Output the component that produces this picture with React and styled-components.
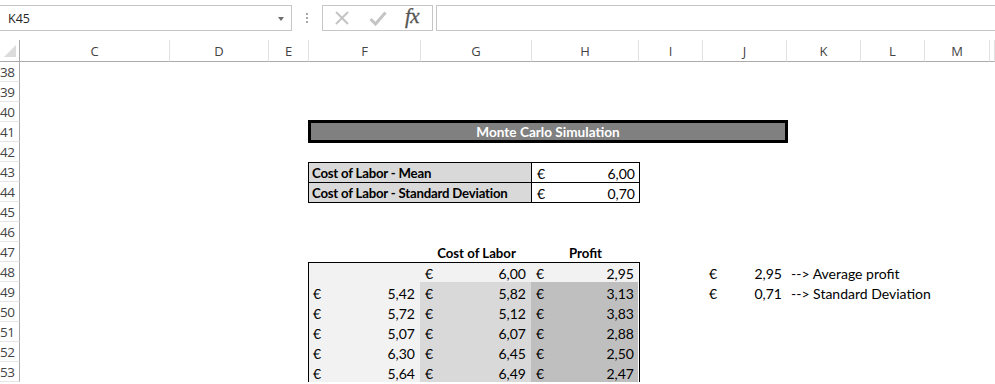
import React from 'react';
import styled, { createGlobalStyle } from 'styled-components';

const Global = createGlobalStyle`
  html, body { margin: 0; padding: 0; background: #fff; }
  body { width: 995px; height: 384px; overflow: hidden; font-family: "Open Sans", sans-serif; }
  #root { width: 995px; overflow: hidden; }
  * { box-sizing: border-box; }
`;

const COLUMNS = [
  ['C', 150], ['D', 99], ['E', 40], ['F', 112], ['G', 111], ['H', 107],
  ['I', 64], ['J', 84], ['K', 74], ['L', 64], ['M', 65], ['', 5],
];
const ROWS = Array.from({ length: 16 }, (_, i) => 38 + i);

const colIndex = (letter) => COLUMNS.findIndex((c) => c[0] === letter) + 2;
const rowIndex = (r) => r - 36;

/* ---------- formula bar ---------- */
const FormulaBar = styled.div`
  height: 40px;
  display: flex;
  align-items: flex-start;
  padding-top: 5px;
  overflow: hidden;
`;

const NameBox = styled.div`
  flex: none;
  width: 293px;
  height: 26px;
  margin-left: -1px;
  border: 1px solid #c6c6c6;
  display: flex;
  align-items: center;
  justify-content: space-between;
  padding: 0 7px 0 8px;
  font: 12.5px "Open Sans", sans-serif;
  color: #262626;
`;

const DropArrow = styled.span`
  width: 0;
  height: 0;
  border-left: 3.5px solid transparent;
  border-right: 3.5px solid transparent;
  border-top: 4px solid #6d6d6d;
  margin-top: 1px;
`;

const Grip = styled.div`
  flex: none;
  width: 30px;
  height: 26px;
  display: flex;
  flex-direction: column;
  align-items: center;
  justify-content: center;
  gap: 2px;
  & > i { width: 2px; height: 2px; background: #a8a8a8; display: block; }
`;

const FxBox = styled.div`
  flex: none;
  width: 111px;
  height: 26px;
  border: 1px solid #c6c6c6;
  display: flex;
  align-items: center;
  padding-left: 10px;
`;

const FxIconSlot = styled.span`
  width: ${(p) => p.w}px;
  margin-left: ${(p) => p.ml || 0}px;
  display: flex;
  align-items: center;
  justify-content: center;
`;

const FxText = styled.span`
  font: italic 21px "Liberation Serif", serif;
  color: #555;
  letter-spacing: -0.5px;
  line-height: 1;
  margin-top: -3px;
  -webkit-text-stroke: 0.3px #555;
`;

const FormulaInput = styled.div`
  flex: none;
  width: 600px;
  height: 26px;
  margin-left: 3px;
  border: 1px solid #c6c6c6;
`;

/* ---------- sheet ---------- */
const Sheet = styled.div`
  display: grid;
  grid-template-columns: 20px ${COLUMNS.map((c) => c[1] + 'px').join(' ')};
  grid-template-rows: 22px repeat(${ROWS.length}, 20px);
  font-family: "Lato", "Liberation Sans", sans-serif;
  font-size: 14px;
  color: #000;
`;

const Corner = styled.div`
  grid-column: 1;
  grid-row: 1;
  border-bottom: 1px solid #ababab;
  border-right: 1px solid #ababab;
  position: relative;
  &::after {
    content: '';
    position: absolute;
    right: 3px;
    bottom: 4px;
    width: 0;
    height: 0;
    border-left: 12px solid transparent;
    border-bottom: 12px solid #dcdcdc;
  }
`;

const ColHead = styled.div`
  grid-row: 1;
  border-bottom: 1px solid #ababab;
  border-right: 1px solid #e1e1e1;
  display: flex;
  align-items: center;
  justify-content: center;
  font: 13px "Open Sans", sans-serif;
  color: #444;
  padding-top: 1px;
`;

const RowHead = styled.div`
  grid-column: 1;
  grid-row: ${(p) => p.row};
  border-right: 1px solid #ababab;
  border-bottom: 1px solid #e6e6e6;
  display: flex;
  align-items: center;
  padding-left: 0;
  font: 13.5px "Open Sans", sans-serif;
  color: #444;
  letter-spacing: -0.4px;
`;

const TitleBar = styled.div`
  grid-column: ${colIndex('F')} / ${colIndex('J') + 1};
  grid-row: ${rowIndex(41)};
  margin: -2px -1px -1px -1px;
  border: 3px solid #000;
  background: #808080;
  color: #fff;
  font-weight: 700;
  font-size: 13.6px;
  display: flex;
  align-items: center;
  justify-content: center;
  padding-top: 1px;
`;

const ParamTable = styled.div`
  grid-column: ${colIndex('F')} / ${colIndex('H') + 1};
  grid-row: ${rowIndex(43)} / ${rowIndex(45)};
  margin: 0 -1px -1px -1px;
  display: grid;
  grid-template-columns: 222px 107px;
  grid-template-rows: 19px 19px;
  gap: 1px;
  background: #000;
  border: 1px solid #000;
`;

const ParamLabel = styled.div`
  background: #d9d9d9;
  font-weight: 700;
  font-size: 13.2px;
  letter-spacing: -0.2px;
  display: flex;
  align-items: center;
  padding: 1px 0 0 3px;
  white-space: nowrap;
`;

const Money = styled.div`
  background: ${(p) => p.bg || 'transparent'};
  display: flex;
  align-items: center;
  justify-content: space-between;
  padding: 2px ${(p) => p.pr ?? 5}px 0 ${(p) => p.pl ?? 5}px;
  white-space: nowrap;
`;

const ColTitle = styled.div`
  grid-row: ${rowIndex(47)};
  grid-column: ${(p) => p.col};
  font-weight: 700;
  font-size: 13.2px;
  display: flex;
  align-items: center;
  justify-content: center;
  padding-top: 2px;
`;

const DataTable = styled.div`
  grid-column: ${colIndex('F')} / ${colIndex('H') + 1};
  grid-row: ${rowIndex(48)} / ${rowIndex(53) + 1};
  margin: 0 -1px 0 -1px;
  border: 1px solid #000;
  border-bottom: none;
  display: grid;
  grid-template-columns: 111px 111px 107px;
  grid-template-rows: 19px repeat(5, 20px);
`;

const SideValue = styled(Money)`
  grid-column: ${colIndex('J')};
  grid-row: ${(p) => p.row};
`;

const SideNote = styled.div`
  grid-column: ${colIndex('K')} / span 3;
  grid-row: ${(p) => p.row};
  display: flex;
  align-items: center;
  padding: 2px 0 0 4px;
  white-space: nowrap;
`;

const LIGHT = '#f2f2f2';
const MID = '#d9d9d9';
const DARK = '#bfbfbf';

const DATA = [
  [null, '6,00', '2,95'],
  ['5,42', '5,82', '3,13'],
  ['5,72', '5,12', '3,83'],
  ['5,07', '6,07', '2,88'],
  ['6,30', '6,45', '2,50'],
  ['5,64', '6,49', '2,47'],
];

const Euro = ({ value, bg, pl, pr }) => (
  <Money bg={bg} pl={pl} pr={pr}>
    {value !== null ? (
      <>
        <span>€</span>
        <span>{value}</span>
      </>
    ) : null}
  </Money>
);

const CrossIcon = () => (
  <svg width="16" height="16" viewBox="0 0 16 16">
    <path d="M2 2 L14 14 M14 2 L2 14" stroke="#c4c4c4" strokeWidth="2" fill="none" />
  </svg>
);

const CheckIcon = () => (
  <svg width="18" height="16" viewBox="0 0 18 16">
    <path d="M1.5 9 L6.5 14 L16.5 2.5" stroke="#c4c4c4" strokeWidth="3" fill="none" />
  </svg>
);

export default function App() {
  return (
    <>
      <Global />
      <FormulaBar>
        <NameBox>
          <span>K45</span>
          <DropArrow />
        </NameBox>
        <Grip>
          <i />
          <i />
          <i />
        </Grip>
        <FxBox>
          <FxIconSlot w={17}>
            <CrossIcon />
          </FxIconSlot>
          <FxIconSlot w={19} ml={18}>
            <CheckIcon />
          </FxIconSlot>
          <FxIconSlot w={24} ml={13}>
            <FxText>fx</FxText>
          </FxIconSlot>
        </FxBox>
        <FormulaInput />
      </FormulaBar>

      <Sheet>
        <Corner />
        {COLUMNS.map(([k], i) => (
          <ColHead key={i}>{k}</ColHead>
        ))}
        {ROWS.map((r) => (
          <RowHead key={r} row={rowIndex(r)}>
            {r}
          </RowHead>
        ))}

        <TitleBar>Monte Carlo Simulation</TitleBar>

        <ParamTable>
          <ParamLabel>Cost of Labor - Mean</ParamLabel>
          <Euro value="6,00" bg="#fff" pl={5} pr={4} />
          <ParamLabel>Cost of Labor - Standard Deviation</ParamLabel>
          <Euro value="0,70" bg="#fff" pl={5} pr={4} />
        </ParamTable>

        <ColTitle col={colIndex('G')}>Cost of Labor</ColTitle>
        <ColTitle col={colIndex('H')}>Profit</ColTitle>

        <DataTable>
          {DATA.map((row, i) =>
            row.map((v, j) => {
              const bg = i === 0 || j === 0 ? LIGHT : j === 1 ? MID : DARK;
              return <Euro key={`${i}-${j}`} value={v} bg={bg} pl={j === 0 ? 4 : 5} pr={j === 2 ? 4 : 5} />;
            })
          )}
        </DataTable>

        <SideValue row={rowIndex(48)} pl={6} pr={5}>
          <span>€</span>
          <span>2,95</span>
        </SideValue>
        <SideNote row={rowIndex(48)}>--&gt; Average profit</SideNote>
        <SideValue row={rowIndex(49)} pl={6} pr={5}>
          <span>€</span>
          <span>0,71</span>
        </SideValue>
        <SideNote row={rowIndex(49)}>--&gt; Standard Deviation</SideNote>
      </Sheet>
    </>
  );
}
